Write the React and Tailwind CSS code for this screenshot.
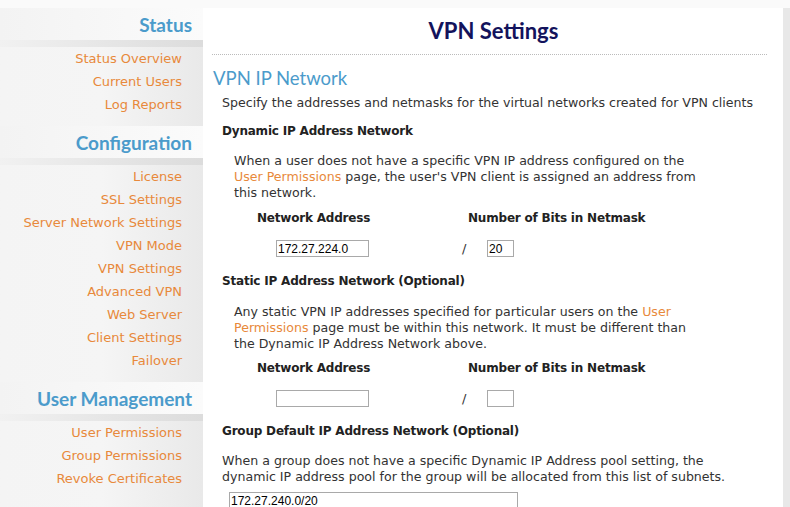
import React from "react";

const side = "font-['DejaVu_Sans',sans-serif]";
const head = "font-['Lato',sans-serif]";
const body = "font-['DejaVu_Sans',sans-serif]";

function SideHeader({ children }) {
  return (
    <div>
      <div className={`h-[32px] flex items-center justify-end pr-[11px] pt-[3px] bg-gradient-to-r from-[#f3f3f3] to-[#fbfbfb] text-[19px] font-bold text-[#4b9bcb] ${head}`}>
        {children}
      </div>
      <div className="h-[7px] bg-gradient-to-r from-[#f1f1f1] to-[#dcdcdc]" />
    </div>
  );
}

function SideLinks({ items }) {
  return (
    <div className="flex flex-col">
      {items.map((t) => (
        <div key={t} className={`h-[23px] flex items-center justify-end pr-[21px] pt-[1px] text-[13px] text-[#e8893b] ${side}`}>
          {t}
        </div>
      ))}
    </div>
  );
}

function Input({ w, value }) {
  return (
    <div className={`${w} h-[17px] border border-[#a9a9a9] bg-white flex items-center pl-[1px] text-[12px] text-black font-['Liberation_Sans',sans-serif] leading-none`}>
      {value}
    </div>
  );
}

const bold = "text-[12px] tracking-[-0.2px] font-bold text-[#222] leading-[16px] whitespace-nowrap";

function NetRow({ addr, bits }) {
  return (
    <div className="pl-[45px]">
      <div className={`flex ${bold}`}>
        <div className="w-[211px]">Network Address</div>
        <div>Number of Bits in Netmask</div>
      </div>
      <div className="flex items-center mt-[14px]">
        <div className="w-[19px]" />
        <Input w="w-[93px]" value={addr} />
        <div className="w-[93px]" />
        <div className="text-[13px] text-[#333] w-[25px] leading-[16px]">/</div>
        <Input w="w-[27px]" value={bits} />
      </div>
    </div>
  );
}

const txt = "text-[12.6px] leading-[16px] whitespace-nowrap";

export default function App() {
  return (
    <div className={`w-[790px] h-[507px] overflow-hidden bg-[#fafafa] pt-[8px] flex ${body}`}>
      <div className="w-[203px] shrink-0 bg-gradient-to-r from-[#f4f4f4] via-[#f5f5f5] to-[#e9e9e9] flex flex-col">
        <SideHeader>Status</SideHeader>
        <SideLinks items={["Status Overview", "Current Users", "Log Reports"]} />
        <div className="h-[10px]" />
        <SideHeader>Configuration</SideHeader>
        <SideLinks
          items={[
            "License",
            "SSL Settings",
            "Server Network Settings",
            "VPN Mode",
            "VPN Settings",
            "Advanced VPN",
            "Web Server",
            "Client Settings",
            "Failover",
          ]}
        />
        <div className="h-[10px]" />
        <SideHeader>User Management</SideHeader>
        <SideLinks items={["User Permissions", "Group Permissions", "Revoke Certificates"]} />
      </div>
      <div className="w-[580px] shrink-0 bg-white pl-[9px] pr-[16px] text-[#333]">
        <div className={`h-[46px] flex items-center justify-center pl-[8px] pb-[2px] text-[22px] font-bold text-[#13135c] ${head}`}>
          VPN Settings
        </div>
        <div className="border-t border-dotted border-[#bbbbbb]" />
        <div className={`mt-[12px] pl-[1px] text-[18.5px] text-[#4b9bcb] leading-[22px] ${head}`}>VPN IP Network</div>
        <div className={`pl-[10px] mt-[6px] ${txt}`}>
          Specify the addresses and netmasks for the virtual networks created for VPN clients
        </div>
        <div className={`pl-[10px] mt-[12px] ${bold}`}>Dynamic IP Address Network</div>
        <div className={`pl-[22px] mt-[14px] ${txt}`}>
          When a user does not have a specific VPN IP address configured on the
          <br />
          <span className="text-[#e8893b]">User Permissions</span> page, the user's VPN client is assigned an address from
          <br />
          this network.
        </div>
        <div className="mt-[9px]">
          <NetRow addr="172.27.224.0" bits="20" />
        </div>
        <div className={`pl-[10px] mt-[16px] ${bold}`}>Static IP Address Network (Optional)</div>
        <div className={`pl-[22px] mt-[15px] ${txt}`}>
          Any static VPN IP addresses specified for particular users on the{" "}
          <span className="text-[#e8893b]">User</span>
          <br />
          <span className="text-[#e8893b]">Permissions</span> page must be within this network. It must be different than
          <br />
          the Dynamic IP Address Network above.
        </div>
        <div className="mt-[8px]">
          <NetRow addr="" bits="" />
        </div>
        <div className={`pl-[10px] mt-[16px] ${bold}`}>Group Default IP Address Network (Optional)</div>
        <div className={`pl-[10px] mt-[14px] ${txt}`}>
          When a group does not have a specific Dynamic IP Address pool setting, the
          <br />
          dynamic IP address pool for the group will be allocated from this list of subnets.
        </div>
        <div className="pl-[17px] mt-[7px]">
          <Input w="w-[289px]" value="172.27.240.0/20" />
        </div>
      </div>
      <div className="flex-1 bg-[#e8e8e8]" />
    </div>
  );
}
